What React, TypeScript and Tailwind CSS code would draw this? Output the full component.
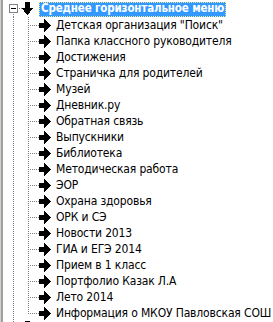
import React from "react";

const items = [
  "Детская организация \"Поиск\"",
  "Папка классного руководителя",
  "Достижения",
  "Страничка для родителей",
  "Музей",
  "Дневник.ру",
  "Обратная связь",
  "Выпускники",
  "Библиотека",
  "Методическая работа",
  "ЭОР",
  "Охрана здоровья",
  "ОРК и СЭ",
  "Новости 2013",
  "ГИА и ЕГЭ 2014",
  "Прием в 1 класс",
  "Портфолио Казак Л.А",
  "Лето 2014",
  "Информация о МКОУ Павловская СОШ",
];

const DOT = "#808080";

function VDots({ x, y1, y2 }: { x: number; y1: number; y2: number }) {
  const out: React.ReactNode[] = [];
  for (let y = y1; y < y2; y += 2) {
    out.push(<rect key={y} x={x} y={y} width={1} height={1} fill={DOT} />);
  }
  return <>{out}</>;
}
function HDots({ y, x1, x2 }: { y: number; x1: number; x2: number }) {
  const out: React.ReactNode[] = [];
  for (let x = x1; x < x2; x += 2) {
    out.push(<rect key={x} x={x} y={y} width={1} height={1} fill={DOT} />);
  }
  return <>{out}</>;
}

function ChildConnector({ last }: { last: boolean }) {
  return (
    <svg width={52} height={16} viewBox="3 0 52 16" shapeRendering="crispEdges" className="shrink-0">
      <VDots x={13} y1={0} y2={16} />
      <VDots x={28} y1={0} y2={last ? 9 : 16} />
      <HDots y={8} x1={30} x2={39} />
      <rect x={39} y={6} width={6} height={5} fill="#000" />
      <polygon points="44,2 44,15 51,8.5" fill="#000" />
    </svg>
  );
}

function RootConnector() {
  return (
    <svg width={36} height={16} viewBox="3 0 36 16" shapeRendering="crispEdges" className="shrink-0">
      <rect x={9.5} y={3.5} width={8} height={8} fill="#fff" stroke="#808080" strokeWidth={1} />
      <rect x={11} y={7} width={5} height={1} fill="#000" />
      <VDots x={13} y1={13} y2={16} />
      <HDots y={7} x1={19} x2={23} />
      <rect x={25} y={1} width={5} height={7} fill="#000" />
      <polygon points="21.5,7 33.5,7 27.5,14" fill="#000" />
    </svg>
  );
}

export default function App() {
  return (
    <div
      className="w-[273px] h-[322px] overflow-hidden bg-white flex"
      style={{ fontFamily: "'DejaVu Sans Condensed', 'DejaVu Sans', sans-serif" }}
    >
      <div className="w-px h-full bg-[#d4d0c8] shrink-0" />
      <div className="w-[2px] h-full bg-[#a0a0a0] shrink-0" />
      <div className="flex flex-col pt-px">
        <div className="flex items-center h-4">
          <RootConnector />
          <div className="h-[15px] flex items-center px-[2px] bg-[#3399ff] text-white font-bold text-[11.5px] tracking-[-0.15px] leading-none whitespace-nowrap outline-1 outline-dotted outline-[#e8e890] -outline-offset-1">
            Среднее горизонтальное меню
          </div>
        </div>
        {items.map((t, i) => (
          <div key={i} className="flex items-center h-4">
            <ChildConnector last={i === items.length - 1} />
            <span className="text-[12px] tracking-[-0.15px] leading-none text-black whitespace-nowrap pl-[1px]">{t}</span>
          </div>
        ))}
        <div className="flex items-center h-4">
          <svg width={36} height={16} viewBox="3 0 36 16" shapeRendering="crispEdges" className="shrink-0">
            <VDots x={13} y1={0} y2={8} />
            <rect x={25} y={0} width={5} height={7} fill="#000" />
          </svg>
        </div>
      </div>
    </div>
  );
}
